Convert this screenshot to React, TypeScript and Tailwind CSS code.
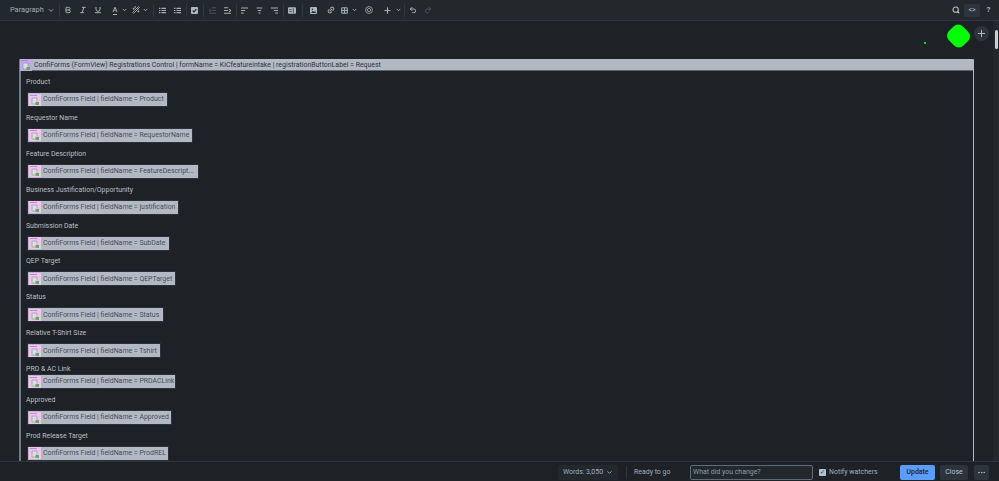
import {
  Bold,
  ChevronDown,
  Italic,
  Link2,
  MoreHorizontal,
  Plus,
  Redo2,
  Search,
  Underline,
  Undo2,
  Wand2,
} from "lucide-react";
import type { ReactNode } from "react";

const CAMPOS = [
  { etiqueta: "Product", campo: "Product", ancho: "w-[141px]", gap: "mt-[5px]" },
  { etiqueta: "Requestor Name", campo: "RequestorName", ancho: "w-[166px]", gap: "mt-[5px]" },
  { etiqueta: "Feature Description", campo: "FeatureDescript...", ancho: "w-[172px]", gap: "mt-[5px]" },
  { etiqueta: "Business Justification/Opportunity", campo: "justification", ancho: "w-[152px]", gap: "mt-[5px]" },
  { etiqueta: "Submission Date", campo: "SubDate", ancho: "w-[143px]", gap: "mt-[5px]" },
  { etiqueta: "QEP Target", campo: "QEPTarget", ancho: "w-[149px]", gap: "mt-[5px]" },
  { etiqueta: "Status", campo: "Status", ancho: "w-[137px]", gap: "mt-[5px]" },
  { etiqueta: "Relative T-Shirt Size", campo: "Tshirt", ancho: "w-[134px]", gap: "mt-[5px]" },
  { etiqueta: "PRD & AC Link", campo: "PRDACLink", ancho: "w-[149px]", gap: "mt-0" },
  { etiqueta: "Approved", campo: "Approved", ancho: "w-[145px]", gap: "mt-[5px]" },
  { etiqueta: "Prod Release Target", campo: "ProdREL", ancho: "w-[142px]", gap: "mt-[5px]" },
];

function Sep({ ml = "ml-[1px]" }: { ml?: string }) {
  return <div className={`mr-[0.5px] h-[13px] w-px bg-[#2f363c] ${ml}`} />;
}

function Btn({ children, ancho = "w-[15px]" }: { children: ReactNode; ancho?: string }) {
  return <div className={`flex h-[14px] shrink-0 items-center justify-center text-[#9fadbc] ${ancho}`}>{children}</div>;
}

function Flecha() {
  return <ChevronDown size={6} strokeWidth={3.6} className="ml-[0.5px] w-[7px] shrink-0 text-[#9fadbc]" />;
}

// iconos de la barra: trazos gruesos, como los de Atlassian
function Lineas({ d }: { d: string }) {
  return (
    <svg width="7" height="7" viewBox="0 0 10 10" fill="none" stroke="currentColor" strokeWidth="1.6">
      <path d={d} />
    </svg>
  );
}

function Relleno({ ancho = 7, children }: { ancho?: number; children: ReactNode }) {
  return (
    <svg width={ancho} height="7" viewBox={`0 0 ${ancho === 7 ? 10 : 12} 10`}>
      <rect width={ancho === 7 ? 10 : 12} height="10" rx="1.5" fill="#aab5c2" />
      {children}
    </svg>
  );
}

function IconoMacro({ fondo }: { fondo: string }) {
  return (
    <svg width="12" height="12" viewBox="0 0 12 12" className="shrink-0">
      <rect width="12" height="12" fill={fondo} />
      <rect x="1" y="1" width="7" height="0.8" fill="#a77fd6" />
      <rect x="3" y="4" width="5" height="6" fill="#dcdce4" stroke="#8b8f9c" strokeWidth="0.6" />
      <rect x="6.5" y="8" width="3.5" height="3" fill="#54b948" />
    </svg>
  );
}

export default function App() {
  return (
    <div className="relative flex h-screen flex-col overflow-hidden bg-[#1d2125] font-['Roboto',sans-serif] text-[6.95px] text-[#b9bfc6] opacity-[0.995] [will-change:opacity]">
      <header className="flex h-[21px] shrink-0 items-center border-b border-[#2c333a] bg-[#22272b] pl-[10px] pr-[4px]">
        <span className="w-[37px] text-[7.4px] text-[#9fadbc]">Paragraph</span>
        <ChevronDown size={7} strokeWidth={3.2} className="w-[8px] text-[#9fadbc]" />
        <Sep ml="ml-[4px]" />
        <Btn><Bold size={8} strokeWidth={3} /></Btn>
        <Btn><Italic size={8} strokeWidth={3} /></Btn>
        <Btn><Underline size={8} strokeWidth={3} /></Btn>
        <div className="ml-[4.5px] flex items-center"><Btn ancho="w-[10px]"><span className="border-b border-[#9fadbc] text-[7.5px] font-medium leading-[8px]">A</span></Btn><Flecha /></div>
        <div className="ml-[3.5px] flex items-center"><Btn ancho="w-[10px]"><Wand2 size={8} strokeWidth={2.6} /></Btn><Flecha /></div>
        <Sep ml="ml-[4.5px]" />
        <Btn><Lineas d="M3.5 2h6.5M3.5 5h6.5M3.5 8h6.5M0 2h2M0 5h2M0 8h2" /></Btn>
        <Btn><Lineas d="M3.5 2h6.5M3.5 5h6.5M3.5 8h6.5M0 2h2M0 5h2M0 8h2" /></Btn>
        <Sep />
        <Btn><Relleno><path d="M2.5 5l1.8 1.9L7.6 3.2" fill="none" stroke="#22272b" strokeWidth="1.6" /></Relleno></Btn>
        <Sep />
        <Btn><span className="text-[#454f59]"><Lineas d="M4 1h6M4 5h6M0 9h10M2.5 3L.5 5l2 2" /></span></Btn>
        <Btn><Lineas d="M0 1h6M0 5h6M0 9h10M7.5 3l2 2-2 2" /></Btn>
        <Sep />
        <Btn><Lineas d="M0 1.5h10M0 5h6M0 8.5h4" /></Btn>
        <Btn><Lineas d="M1 1.5h8M2.5 5h5M3.5 8.5h3" /></Btn>
        <Btn><Lineas d="M0 1.5h10M4 5h6M6 8.5h4" /></Btn>
        <Sep />
        <Btn><Relleno ancho={8}><path d="M8 1.5v7" stroke="#22272b" strokeWidth="1" /><rect x="2" y="3" width="3.5" height="1" fill="#22272b" /><rect x="2" y="6" width="3.5" height="1" fill="#22272b" /></Relleno></Btn>
        <Sep ml="ml-[2px]" />
        <Btn ancho="w-[20px]"><Relleno><path d="M1.5 8.5l2.5-3 1.8 1.5 1.4-1.3L8.5 8.5z" fill="#22272b" /><circle cx="3.4" cy="3.2" r="1" fill="#22272b" /></Relleno></Btn>
        <Btn><Link2 size={8} strokeWidth={3} className="-rotate-45" /></Btn>
        <div className="ml-px flex items-center"><Btn ancho="w-[11px]"><svg width="7" height="7" viewBox="0 0 10 10" fill="none" stroke="currentColor" strokeWidth="1.6"><rect x="1" y="1" width="8" height="8" rx="1.2" /><path d="M5 1v8M1 5h8" /></svg></Btn><Flecha /></div>
        <Btn ancho="w-[22px]"><svg width="8" height="8" viewBox="0 0 10 10" fill="none" stroke="currentColor" strokeWidth="1"><circle cx="5" cy="5" r="4.3" /><circle cx="5" cy="5" r="2" /></svg></Btn>
        <div className="ml-[1px] flex items-center"><Btn ancho="w-[14px]"><Plus size={9} strokeWidth={3.2} /></Btn><Flecha /></div>
        <Sep ml="ml-[2px]" />
        <Btn><Undo2 size={8} strokeWidth={3} /></Btn>
        <Btn><span className="text-[#454f59]"><Redo2 size={8} strokeWidth={3} /></span></Btn>
        <div className="ml-auto flex items-center gap-[2px]">
          <Btn ancho="w-[13px]"><Search size={8} strokeWidth={3.2} className="text-[#b6c2cf]" /></Btn>
          <div className="flex h-[13px] w-[16px] items-center justify-center rounded-[2px] bg-[#2c333a] text-[7px] font-medium text-[#9fadbc]">&lt;&gt;</div>
          <Btn ancho="w-[13px]"><span className="text-[8px] font-bold">?</span></Btn>
        </div>
      </header>

      <main className="min-h-0 flex-1 overflow-hidden pl-[19px] pr-[25px] pt-[38px]">
        <section className="flex min-h-[500px] flex-col rounded-t-[1px] border-l-2 border-r border-l-[#6f7a86] border-r-[#b3b9c4]">
          <div className="-ml-px flex h-[12px] items-center gap-[2px] border-b border-[#5b6570] bg-[#b3b9c4] text-[#2c333a]">
            <IconoMacro fondo="#c4a8ee" />
            <span className="whitespace-nowrap pt-px">ConfiForms (FormView) Registrations Control | formName = KiCfeatureintake | registrationButtonLabel = Request</span>
          </div>
          <div className="pl-[5px]">
            {CAMPOS.map((c, i) => (
              <div key={c.campo} className={i === 0 ? "pt-[6px]" : "pt-[5.9px]"}>
                <p className="h-[10px] leading-[10px]">{c.etiqueta}</p>
                <div className={`ml-[1px] flex h-[15px] items-center gap-[2px] border border-[#2a3037] bg-[#b3b9c4] pl-[1px] text-[#454d56] ${c.gap} ${c.ancho}`}>
                  <IconoMacro fondo="#f4c2ee" />
                  <span className="whitespace-nowrap">ConfiForms Field | fieldName = {c.campo}</span>
                </div>
              </div>
            ))}
          </div>
        </section>
      </main>

      <footer className="z-10 flex h-[20px] shrink-0 items-center justify-end border-t border-[#2c333a] bg-[#1d2125] pr-[10px] pt-px">
        <div className="flex h-[15px] w-[60px] items-center justify-center gap-[3px] rounded-[2px] bg-[#22272b] text-[#9fadbc]">Words: 3,050 <ChevronDown size={7} strokeWidth={3} /></div>
        <div className="ml-[8px] mr-[7px] h-[13px] w-px bg-[#2c333a]" />
        <span className="w-[56px] text-[#9fadbc]">Ready to go</span>
        <input readOnly placeholder="What did you change?" className="h-[15px] w-[123px] rounded-[2px] border border-[#5d6a78] bg-[#22272b] px-[2px] text-[6.95px] placeholder:text-[#8c9bab]" />
        <div className="ml-[6px] flex h-[7px] w-[7px] items-center justify-center rounded-[1px] bg-[#b6c2cf] text-[6px] leading-none text-[#1d2125]">✓</div>
        <span className="ml-[3px] w-[51px] whitespace-nowrap text-[#9fadbc]">Notify watchers</span>
        <div className="ml-[20px] flex h-[15px] w-[35px] items-center justify-center rounded-[2px] bg-[#579dff] font-medium text-[#1d2125]">Update</div>
        <div className="ml-[5px] flex h-[15px] w-[28px] items-center justify-center rounded-[2px] bg-[#2c333a] text-[#b6c2cf]">Close</div>
        <div className="ml-[6px] flex h-[15px] w-[15px] items-center justify-center rounded-[2px] bg-[#2c333a] text-[#b6c2cf]"><MoreHorizontal size={9} /></div>
      </footer>

      <div className="absolute left-[946px] top-[24px] h-[24px] w-[25px] rotate-45 rounded-[8px] bg-[#00ff00] [scale:0.82]" />
      <div className="absolute left-[923.5px] top-[42px] h-[2px] w-[2px] bg-[#00e000]" />
      <div className="absolute left-[974px] top-[26px] flex h-[15px] w-[15px] items-center justify-center rounded-full bg-[#2c333a] text-[#b6c2cf]"><Plus size={11} /></div>
      <div className="absolute right-0 top-[21px] h-[440px] w-[6px] bg-[#22272b]" />
      <div className="absolute left-[995px] top-[30px] h-[19px] w-[3px] rounded-full bg-[#c7ced6]" />
    </div>
  );
}
